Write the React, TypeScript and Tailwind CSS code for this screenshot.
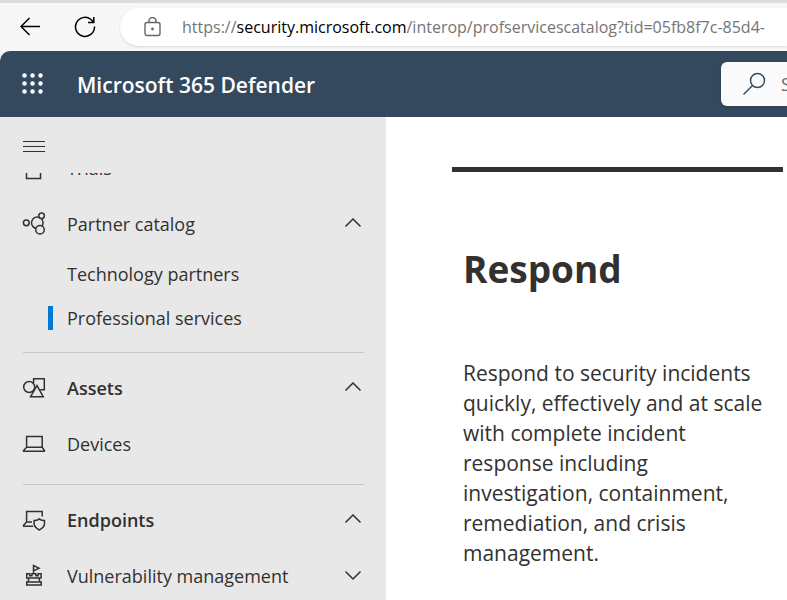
import type { ReactNode } from "react";

function Icon({ children }: { children: ReactNode }) {
  return (
    <svg
      viewBox="0 0 24 24"
      fill="none"
      stroke="currentColor"
      strokeWidth="1.5"
      aria-hidden="true"
      className="size-6 shrink-0"
    >
      {children}
    </svg>
  );
}

const icons = {
  trials: (
    <Icon>
      <path d="M4.5 7h14v15.5h-14zM8 7V3h7v4" />
    </Icon>
  ),
  partners: (
    <Icon>
      <circle cx="4.3" cy="10.8" r="2.9" />
      <circle cx="15.3" cy="10.8" r="5.8" />
      <circle cx="19.6" cy="3.8" r="2.8" fill="#e8e8e8" />
      <circle cx="18" cy="17.8" r="4.3" fill="#e8e8e8" />
    </Icon>
  ),
  assets: (
    <Icon>
      <path d="M11.6 7V2.7H22.3V13.8H18.2" />
      <circle cx="7.2" cy="11" r="5.5" />
      <path d="M15 9.6 8.6 20.7h12.6z" fill="#e8e8e8" />
    </Icon>
  ),
  devices: (
    <Icon>
      <path d="M4.6 15.3V4.6h15.6v10.7M4.6 15.3h15.6l2.2 3.2v.7H1.6v-.7l3-3.2" />
    </Icon>
  ),
  endpoints: (
    <Icon>
      <path d="M4.6 14V3.6h15.6v5M4.6 14H10M4.6 14l-3 3.3v.9H11" />
      <path d="M17.3 10.8c1.5 1.2 3.2 1.7 5.2 1.7v3.1c0 2.7-2 4.8-5.2 6.4-3.2-1.6-5.2-3.7-5.2-6.4v-3.1c2 0 3.7-.5 5.2-1.7z" />
    </Icon>
  ),
  vulnerability: (
    <Icon>
      <path d="M11.5 10.5V1.5l5.5 2.7-5 2.5M4.7 9.7h3v2h2.2v-2h4v2h2.2v-2h3v4.2h-2l.6 4h1.5v3H4.7v-3h1.5l.6-4H4.7zM6.8 13.9h10.3M6.2 17.9h11.5" />
    </Icon>
  ),
};

function Chevron({ open }: { open: boolean }) {
  return (
    <svg
      viewBox="0 0 18 12"
      fill="none"
      stroke="currentColor"
      strokeWidth="1.5"
      aria-hidden="true"
      className="mr-0.5 h-3 w-[18px] shrink-0"
    >
      <path d={open ? "M1.5 8.5 9 1l7.500 7.500" : "M1.5 1.5 9 9l7.500-7.500"} />
    </svg>
  );
}

function NavButton({
  icon,
  label,
  open,
  bold = false,
}: {
  icon: ReactNode;
  label: string;
  open: boolean;
  bold?: boolean;
}) {
  return (
    <button
      type="button"
      aria-expanded={open}
      className="flex h-14 w-full items-center gap-[21px] text-left"
    >
      {icon}
      <span className={bold ? "flex-1 font-semibold" : "flex-1"}>{label}</span>
      <Chevron open={open} />
    </button>
  );
}

function NavLink({ icon, label }: { icon: ReactNode; label: string }) {
  return (
    <a href="#" className="flex h-14 items-center gap-[21px]">
      {icon}
      {label}
    </a>
  );
}

function SubLink({ label, active = false }: { label: string; active?: boolean }) {
  return (
    <a
      href="#"
      aria-current={active ? "page" : undefined}
      className="flex h-11 items-center gap-3.5 pl-[26px]"
    >
      <span className={active ? "h-6 w-[5px] bg-[#0078d4]" : "h-6 w-[5px]"} />
      {label}
    </a>
  );
}

function Divider() {
  return <hr className="mt-3 mb-[7px] ml-px border-[#c8c8c8]" />;
}

export default function App() {
  return (
    <div className="flex h-screen flex-col overflow-hidden bg-[#f7f7f7] font-['Open_Sans','Noto_Sans',sans-serif] text-[#323130]">
      <div className="flex h-[51px] shrink-0 items-center border-t-3 border-[#dcdcdc] pl-5">
        <button type="button" aria-label="Back" className="text-black">
          <svg viewBox="0 0 22 22" fill="none" stroke="currentColor" strokeWidth="1.5" className="size-[22px]">
            <path d="M20 10.5H1M9.5 2 1 10.5 9.5 19" />
          </svg>
        </button>
        <button type="button" aria-label="Refresh" className="ml-8 text-black">
          <svg viewBox="0 0 22 22" fill="none" stroke="currentColor" strokeWidth="1.5" className="size-[22px]">
            <path d="M20.5 10.5A9.5 9.5 0 1 1 17 3.5L19.5 6M19.8 1v5.5H14" />
          </svg>
        </button>
        <div className="ml-6 flex h-[38px] min-w-0 flex-1 items-center gap-[21px] overflow-hidden rounded-l-full bg-white pl-6 shadow-sm">
          <svg
            viewBox="0 0 17 20"
            fill="none"
            stroke="#666"
            strokeWidth="1.4"
            aria-hidden="true"
            className="h-5 w-[17px] shrink-0"
          >
            <rect x="1" y="5.5" width="15" height="13" rx="2" />
            <path d="M5 5.500V4a3.500 3.500 0 0 1 7 0v1.500" />
            <circle cx="8.5" cy="12" r="0.7" fill="#666" />
          </svg>
          <a href="#" className="text-base whitespace-nowrap text-[#757575]">
            https://<span className="text-black">security.microsoft.com</span>
            /interop/profservicescatalog?tid=05fb8f7c-85d4-
          </a>
        </div>
      </div>

      <header className="flex h-[66px] shrink-0 items-center overflow-hidden rounded-tl-[10px] bg-[#34495e] pl-[22px] text-white">
        <button type="button" aria-label="App launcher">
          <svg viewBox="0 0 22 22" fill="currentColor" className="size-[22px]">
            {[2.5, 10.5, 18.5].map((y) =>
              [2.5, 10.5, 18.5].map((x) => <circle key={`${x}-${y}`} cx={x} cy={y} r="2.2" />),
            )}
          </svg>
        </button>
        <h1 className="ml-[33px] flex-1 pt-1 text-[21px] font-semibold whitespace-nowrap">
          Microsoft 365 Defender
        </h1>
        <label className="flex h-11 w-[66px] shrink-0 items-center gap-[15px] overflow-hidden rounded-l-md bg-[#fafafa] pl-[21px] text-[#34495e] shadow">
          <svg
            viewBox="0 0 24 24"
            fill="none"
            stroke="currentColor"
            strokeWidth="1.5"
            aria-hidden="true"
            className="size-6 shrink-0"
          >
            <circle cx="15.5" cy="8.5" r="7" />
            <path d="M10.5 13.5 1.5 22.5" />
          </svg>
          <input
            type="search"
            aria-label="Search"
            placeholder="Search"
            className="w-40 shrink-0 bg-transparent text-lg placeholder:text-[#666]"
          />
        </label>
      </header>

      <div className="flex min-h-0 flex-1">
        <aside className="flex w-[386px] shrink-0 flex-col bg-[#e8e8e8] px-[22px] text-lg">
          <button type="button" aria-label="Collapse navigation" className="flex h-14 shrink-0 items-center">
            <svg viewBox="0 0 24 14" fill="none" stroke="currentColor" className="mt-1 h-3.5 w-6">
              <path d="M1 1.5h22M1 6.5h22M1 11.5h22" />
            </svg>
          </button>
          <nav className="min-h-0 flex-1 overflow-hidden">
            <div className="-mt-[33px]">
              <NavLink icon={icons.trials} label="Trials" />
              <NavButton icon={icons.partners} label="Partner catalog" open />
              <SubLink label="Technology partners" />
              <SubLink label="Professional services" active />
              <Divider />
              <NavButton icon={icons.assets} label="Assets" open bold />
              <NavLink icon={icons.devices} label="Devices" />
              <Divider />
              <NavButton icon={icons.endpoints} label="Endpoints" open bold />
              <NavButton icon={icons.vulnerability} label="Vulnerability management" open={false} />
            </div>
          </nav>
        </aside>

        <main className="min-w-0 flex-1 overflow-hidden bg-white pt-[50px] pr-1 pl-[66px]">
          <section className="border-t-[5px] border-[#323130] px-[11px]">
            <h2 className="mt-[71px] text-[37px] leading-[52px] font-bold">Respond</h2>
            <p className="mt-[63px] text-[21px] leading-[30px]">
              Respond to security incidents quickly, effectively and at scale with complete incident response including
              investigation, containment, remediation, and crisis management.
            </p>
          </section>
        </main>
      </div>
    </div>
  );
}
